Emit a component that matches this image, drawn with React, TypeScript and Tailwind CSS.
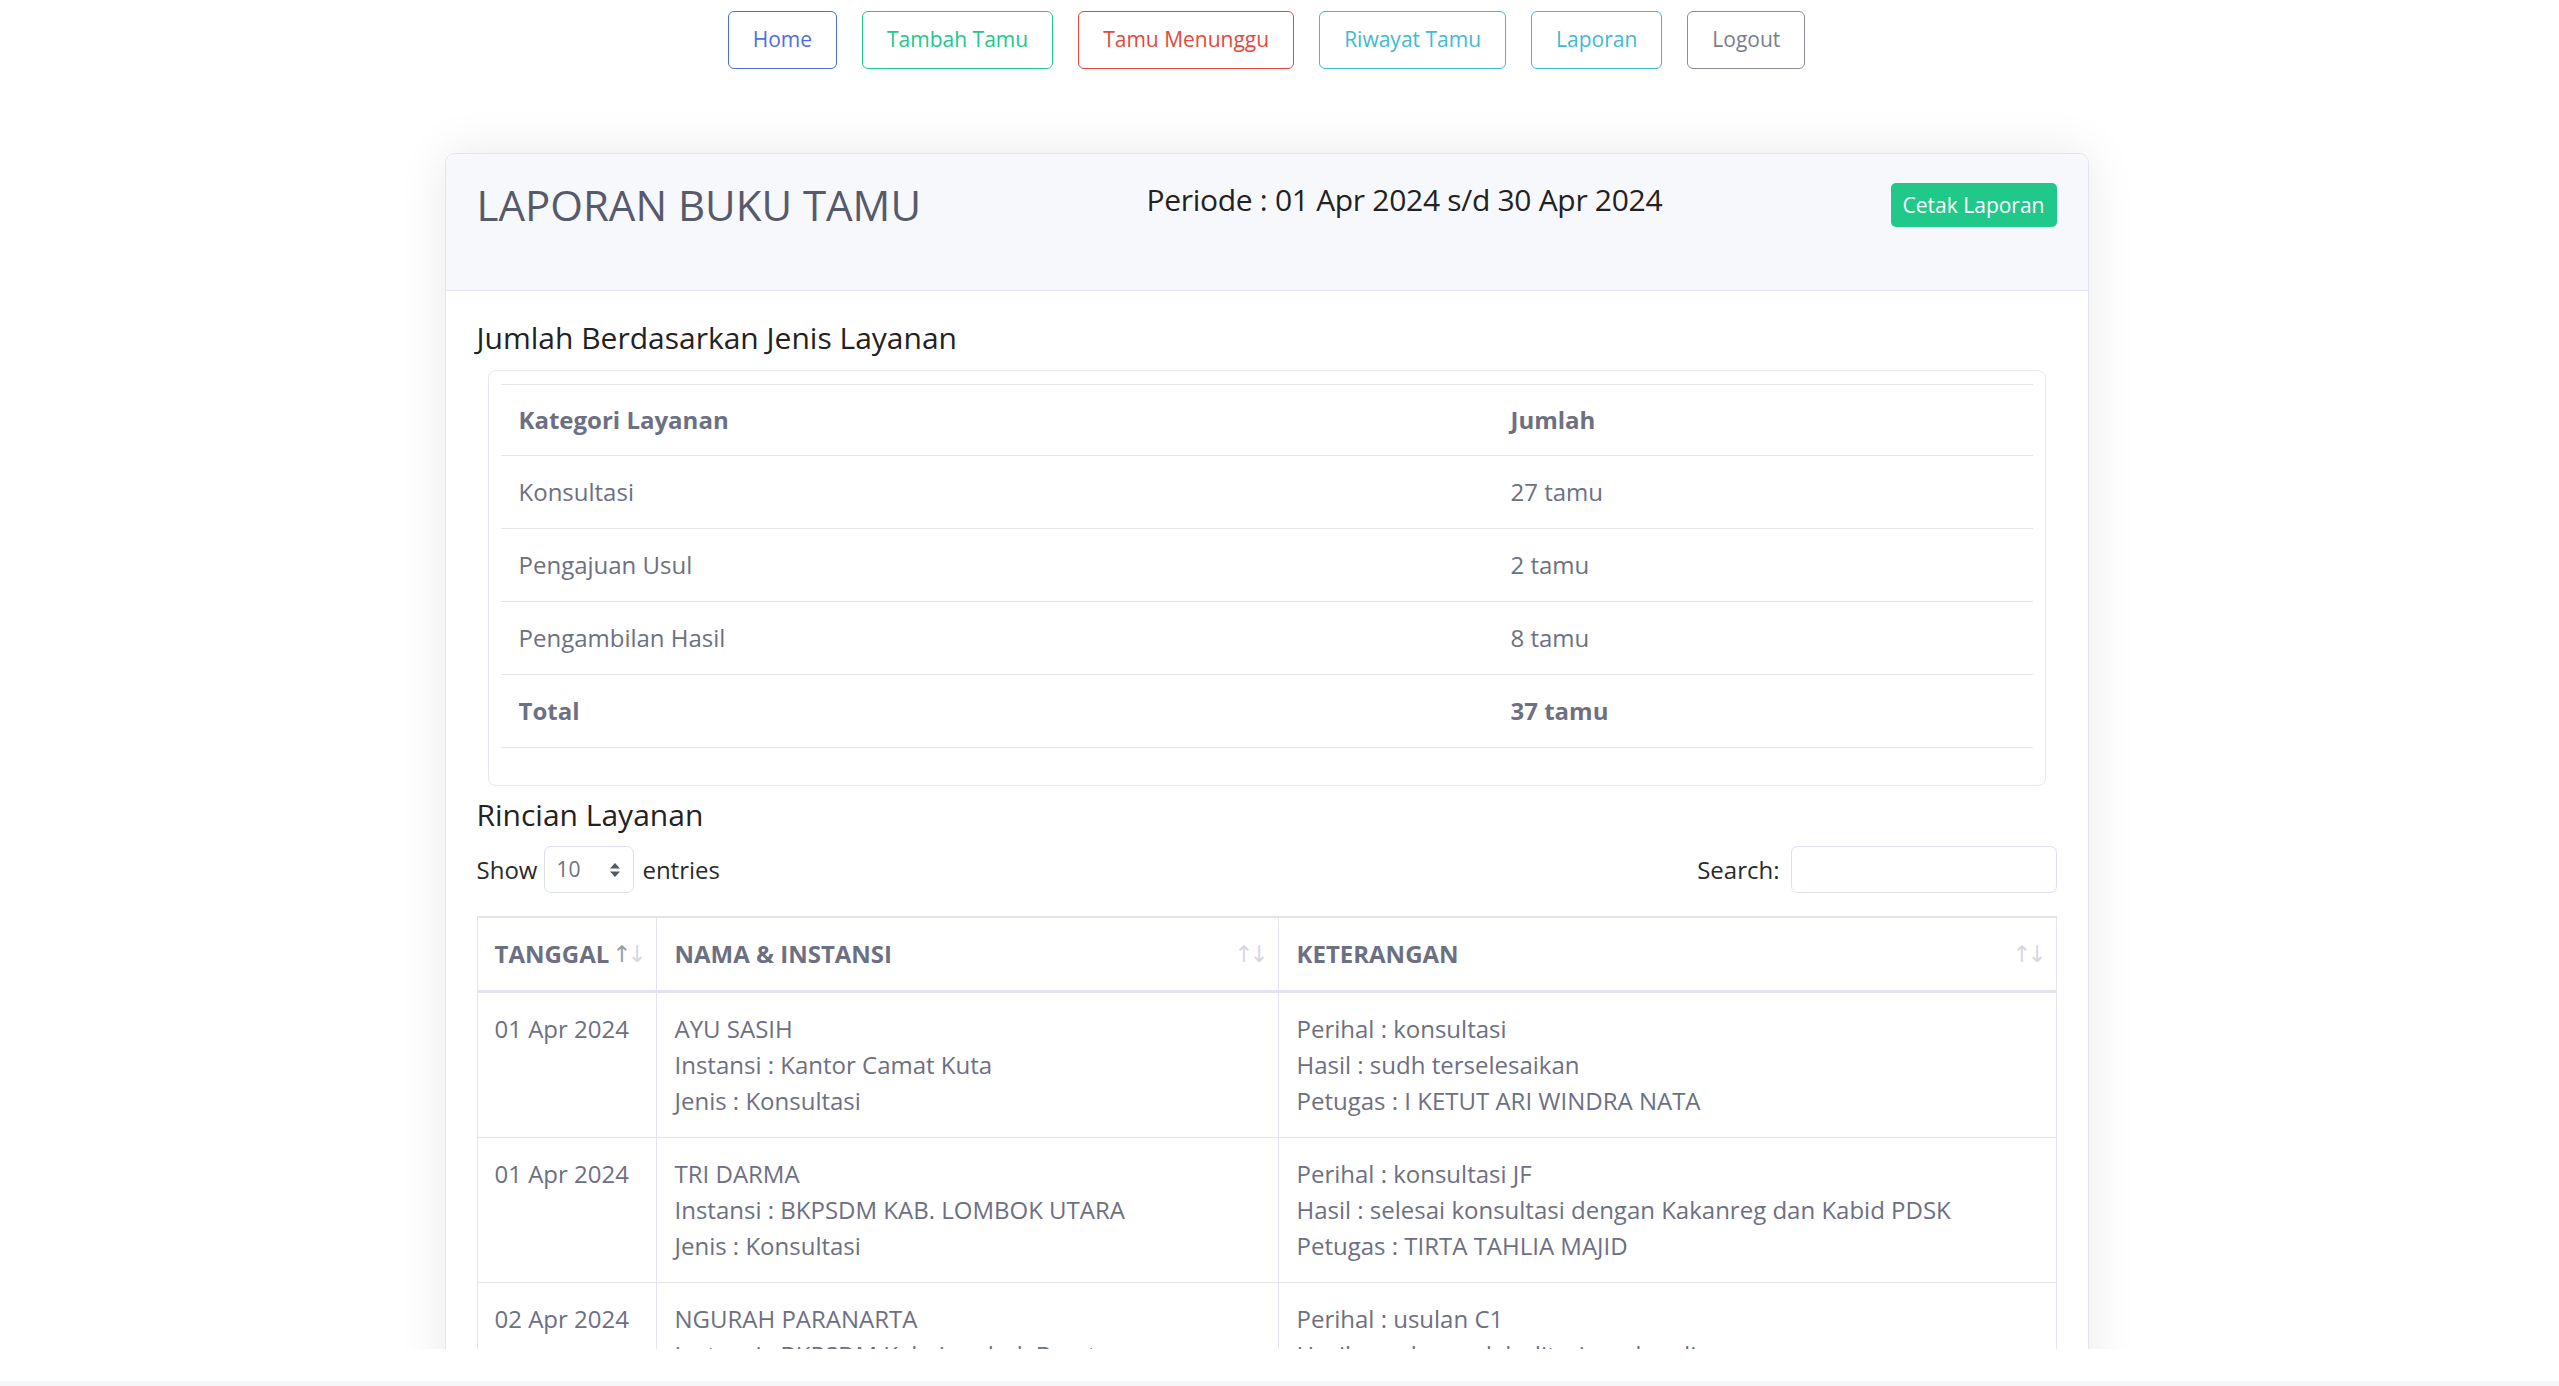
import React from "react";

type Row = { date: string; nama: string[]; ket: string[] };

const rows: Row[] = [
  {
    date: "01 Apr 2024",
    nama: ["AYU SASIH", "Instansi : Kantor Camat Kuta", "Jenis : Konsultasi"],
    ket: ["Perihal : konsultasi", "Hasil : sudh terselesaikan", "Petugas : I KETUT ARI WINDRA NATA"],
  },
  {
    date: "01 Apr 2024",
    nama: ["TRI DARMA", "Instansi : BKPSDM KAB. LOMBOK UTARA", "Jenis : Konsultasi"],
    ket: [
      "Perihal : konsultasi JF",
      "Hasil : selesai konsultasi dengan Kakanreg dan Kabid PDSK",
      "Petugas : TIRTA TAHLIA MAJID",
    ],
  },
  {
    date: "02 Apr 2024",
    nama: ["NGURAH PARANARTA", "Instansi : BKPSDM Kab. Lombok Barat", "Jenis : Pengajuan Usul"],
    ket: ["Perihal : usulan C1", "Hasil : usulan sudah diterima dan diproses", "Petugas : TIRTA TAHLIA MAJID"],
  },
];

const summary = [
  { k: "Konsultasi", v: "27 tamu" },
  { k: "Pengajuan Usul", v: "2 tamu" },
  { k: "Pengambilan Hasil", v: "8 tamu" },
];

function SortIcon({ active }: { active?: boolean }) {
  return (
    <span className="absolute right-[13px] top-1/2 -translate-y-1/2 flex font-['DejaVu_Sans',sans-serif] text-[23px] leading-none tracking-[-4px] font-normal">
      <span className={active ? "text-[#9a9daa]" : "text-[#d6d8de]"}>↑</span>
      <span className="text-[#d6d8de]">↓</span>
    </span>
  );
}

export default function App() {
  const navBtn = "h-[58px] px-[24px] flex items-center rounded-[6px] border text-[21px] bg-white";
  return (
    <div className="w-full h-[1386px] overflow-hidden bg-white font-['Open_Sans',sans-serif] flex flex-col">
      <div className="h-[1349px] overflow-hidden shrink-0">
        <div className="w-[2533px] flex flex-col items-center">
          {/* Nav */}
          <div className="flex gap-[25px] pt-[11px]">
            <button className={`${navBtn} border-[#4e6ee0] text-[#4e6ee0]`}>Home</button>
            <button className={`${navBtn} border-[#22c68a] text-[#22c68a]`}>Tambah Tamu</button>
            <button className={`${navBtn} border-[#e5483c] text-[#e5483c]`}>Tamu Menunggu</button>
            <button className={`${navBtn} border-[#3fbad0] text-[#3fbad0]`}>Riwayat Tamu</button>
            <button className={`${navBtn} border-[#3fbad0] text-[#3fbad0]`}>Laporan</button>
            <button className={`${navBtn} border-[#8a8c99] text-[#7a7d8c]`}>Logout</button>
          </div>

          {/* Card */}
          <div className="mt-[84px] w-[1644px] border border-[#e2e5ee] rounded-[10px] bg-white shadow-[0_0_50px_rgba(0,0,0,0.09)]">
            <div className="h-[137px] bg-[#f7f8fc] border-b border-[#e3e6ef] rounded-t-[10px] px-[31px] pt-[28px] flex items-start">
              <h3 className="w-[670px] text-[42px] leading-[46px] font-normal text-[#575a6a]">LAPORAN BUKU TAMU</h3>
              <h5 className="text-[30px] leading-[36px] font-normal text-[#222] tracking-[-0.3px]">
                Periode : 01 Apr 2024 s/d 30 Apr 2024
              </h5>
              <button className="ml-auto mt-[1px] h-[44px] px-[12px] rounded-[5px] bg-[#20c98a] text-white text-[21px] leading-none">
                Cetak Laporan
              </button>
            </div>

            <div className="px-[31px] pt-[29px]">
              <h5 className="text-[30px] leading-[36px] font-normal text-[#222]">
                Jumlah Berdasarkan Jenis Layanan
              </h5>
              <div className="mt-[14px] mx-[11px] border border-[#e6e7ef] rounded-[8px] px-[12px] pt-[13px] pb-[13px]">
                <table className="w-full border-collapse mb-[24px] text-[24px] leading-[36px] text-[#6d7082]">
                  <colgroup>
                    <col className="w-[992px]" />
                    <col />
                  </colgroup>
                  <thead>
                    <tr className="border-t border-b border-[#e3e4ec]">
                      <th className="text-left font-bold px-[18px] pt-[17px] pb-[17px]">Kategori Layanan</th>
                      <th className="text-left font-bold px-[18px] pt-[17px] pb-[17px]">Jumlah</th>
                    </tr>
                  </thead>
                  <tbody>
                    {summary.map((s) => (
                      <tr key={s.k} className="border-b border-[#e3e4ec]">
                        <td className="px-[18px] py-[18px]">{s.k}</td>
                        <td className="px-[18px] py-[18px]">{s.v}</td>
                      </tr>
                    ))}
                    <tr className="border-b border-[#e3e4ec]">
                      <td className="px-[18px] py-[18px] font-bold">Total</td>
                      <td className="px-[18px] py-[18px] font-bold">37 tamu</td>
                    </tr>
                  </tbody>
                </table>
              </div>

              <h5 className="mt-[11px] text-[30px] leading-[36px] font-normal text-[#222]">
                Rincian Layanan
              </h5>

              <div className="mt-[13px] flex items-center justify-between text-[24px] text-[#2a2a2a]">
                <div className="flex items-center">
                  <span>Show</span>
                  <div className="ml-[7px] mr-[8px] w-[90px] h-[47px] border border-[#dcdfee] rounded-[7px] flex items-center pl-[11px] pr-[12px] text-[21px] text-[#6d7082]">
                    <span>10</span>
                    <svg className="ml-auto" width="12" height="18" viewBox="0 0 12 18">
                      <path d="M6 2 L11 7.5 H1 Z" fill="#555866" />
                      <path d="M6 16 L11 10.5 H1 Z" fill="#555866" />
                    </svg>
                  </div>
                  <span>entries</span>
                </div>
                <div className="flex items-center">
                  <span>Search:</span>
                  <div className="ml-[11px] w-[266px] h-[47px] border border-[#dcdfee] rounded-[7px] bg-white" />
                </div>
              </div>

              <table className="mt-[23px] w-full border-collapse border-x border-[#e3e4ee] text-[24px] leading-[36px] text-[#6d7082]">
                <colgroup>
                  <col className="w-[179px]" />
                  <col className="w-[622px]" />
                  <col />
                </colgroup>
                <thead>
                  <tr className="border-t-2 border-b-[3px] border-[#e1e4f0]">
                    <th className="relative text-left font-bold uppercase px-[17px] py-[18px] border-r border-[#e3e4ee]">
                      TANGGAL
                      <SortIcon active />
                    </th>
                    <th className="relative text-left font-bold px-[18px] py-[18px] border-r border-[#e3e4ee]">
                      NAMA &amp; INSTANSI
                      <SortIcon />
                    </th>
                    <th className="relative text-left font-bold px-[18px] py-[18px]">
                      KETERANGAN
                      <SortIcon />
                    </th>
                  </tr>
                </thead>
                <tbody>
                  {rows.map((r, i) => (
                    <tr key={i} className="border-b border-[#e3e4ee] align-top">
                      <td className="px-[17px] py-[18px] border-r border-[#e3e4ee] whitespace-nowrap">{r.date}</td>
                      <td className="px-[18px] py-[18px] border-r border-[#e3e4ee]">
                        {r.nama.map((l) => (
                          <div key={l}>{l}</div>
                        ))}
                      </td>
                      <td className="px-[18px] py-[18px]">
                        {r.ket.map((l) => (
                          <div key={l}>{l}</div>
                        ))}
                      </td>
                    </tr>
                  ))}
                </tbody>
              </table>
            </div>
          </div>
        </div>
      </div>
      <div className="h-[32px] bg-white shrink-0" />
      <div className="h-[5px] bg-[#f4f6fa] shrink-0" />
    </div>
  );
}
